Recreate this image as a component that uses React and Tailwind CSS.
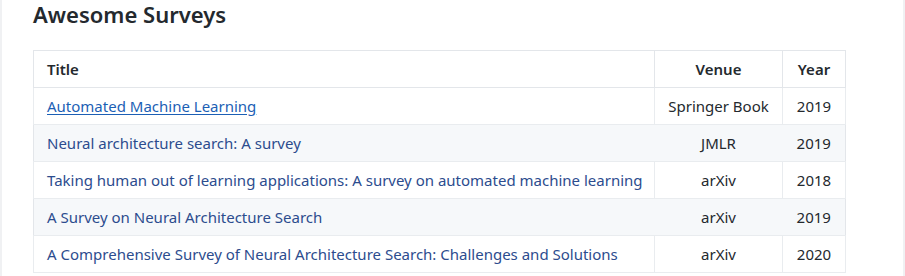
const surveys = [
  { title: "Automated Machine Learning", venue: "Springer Book", year: 2019, active: true },
  { title: "Neural architecture search: A survey", venue: "JMLR", year: 2019 },
  {
    title: "Taking human out of learning applications: A survey on automated machine learning",
    venue: "arXiv",
    year: 2018,
  },
  { title: "A Survey on Neural Architecture Search", venue: "arXiv", year: 2019 },
  {
    title: "A Comprehensive Survey of Neural Architecture Search: Challenges and Solutions",
    venue: "arXiv",
    year: 2020,
  },
];

export default function App() {
  return (
    <div
      className="h-[276px] w-[905px] overflow-hidden bg-white border-x-2 border-[#f0f1f3] text-[#24292e]"
      style={{ fontFamily: '"Noto Sans", "Open Sans", sans-serif' }}
    >
      <div className="pl-[31px]">
        <h2 className="pt-[1px] text-[22px] font-semibold leading-[26px]">Awesome Surveys</h2>

        <table className="mt-[23px] w-[813px] border-collapse border border-[#e3e6ea] text-[15px]">
          <thead>
            <tr className="h-[37px]">
              <th className="border border-[#e3e6ea] pl-[13px] text-left font-semibold">Title</th>
              <th className="w-[128px] border border-[#e3e6ea] text-center font-semibold">Venue</th>
              <th className="w-[63px] border border-[#e3e6ea] text-center font-semibold">Year</th>
            </tr>
          </thead>
          <tbody>
            {surveys.map((s, i) => {
              const striped = i % 2 === 1;
              const cell = striped
                ? "border-y border-[#e9ecef] border-x-[#f6f8fa]"
                : "border border-[#e9ecef]";
              return (
                <tr key={i} className={`h-[37px] ${striped ? "bg-[#f6f8fa]" : "bg-white"}`}>
                  <td className={`${cell} pl-[13px]`}>
                    <a
                      href="#"
                      className={
                        s.active
                          ? "text-[#1c5fb5] underline underline-offset-2"
                          : "text-[#2c4c8e]"
                      }
                    >
                      {s.title}
                    </a>
                  </td>
                  <td className={`${cell} text-center`}>{s.venue}</td>
                  <td className={`${cell} text-center`}>{s.year}</td>
                </tr>
              );
            })}
          </tbody>
        </table>
      </div>
    </div>
  );
}
